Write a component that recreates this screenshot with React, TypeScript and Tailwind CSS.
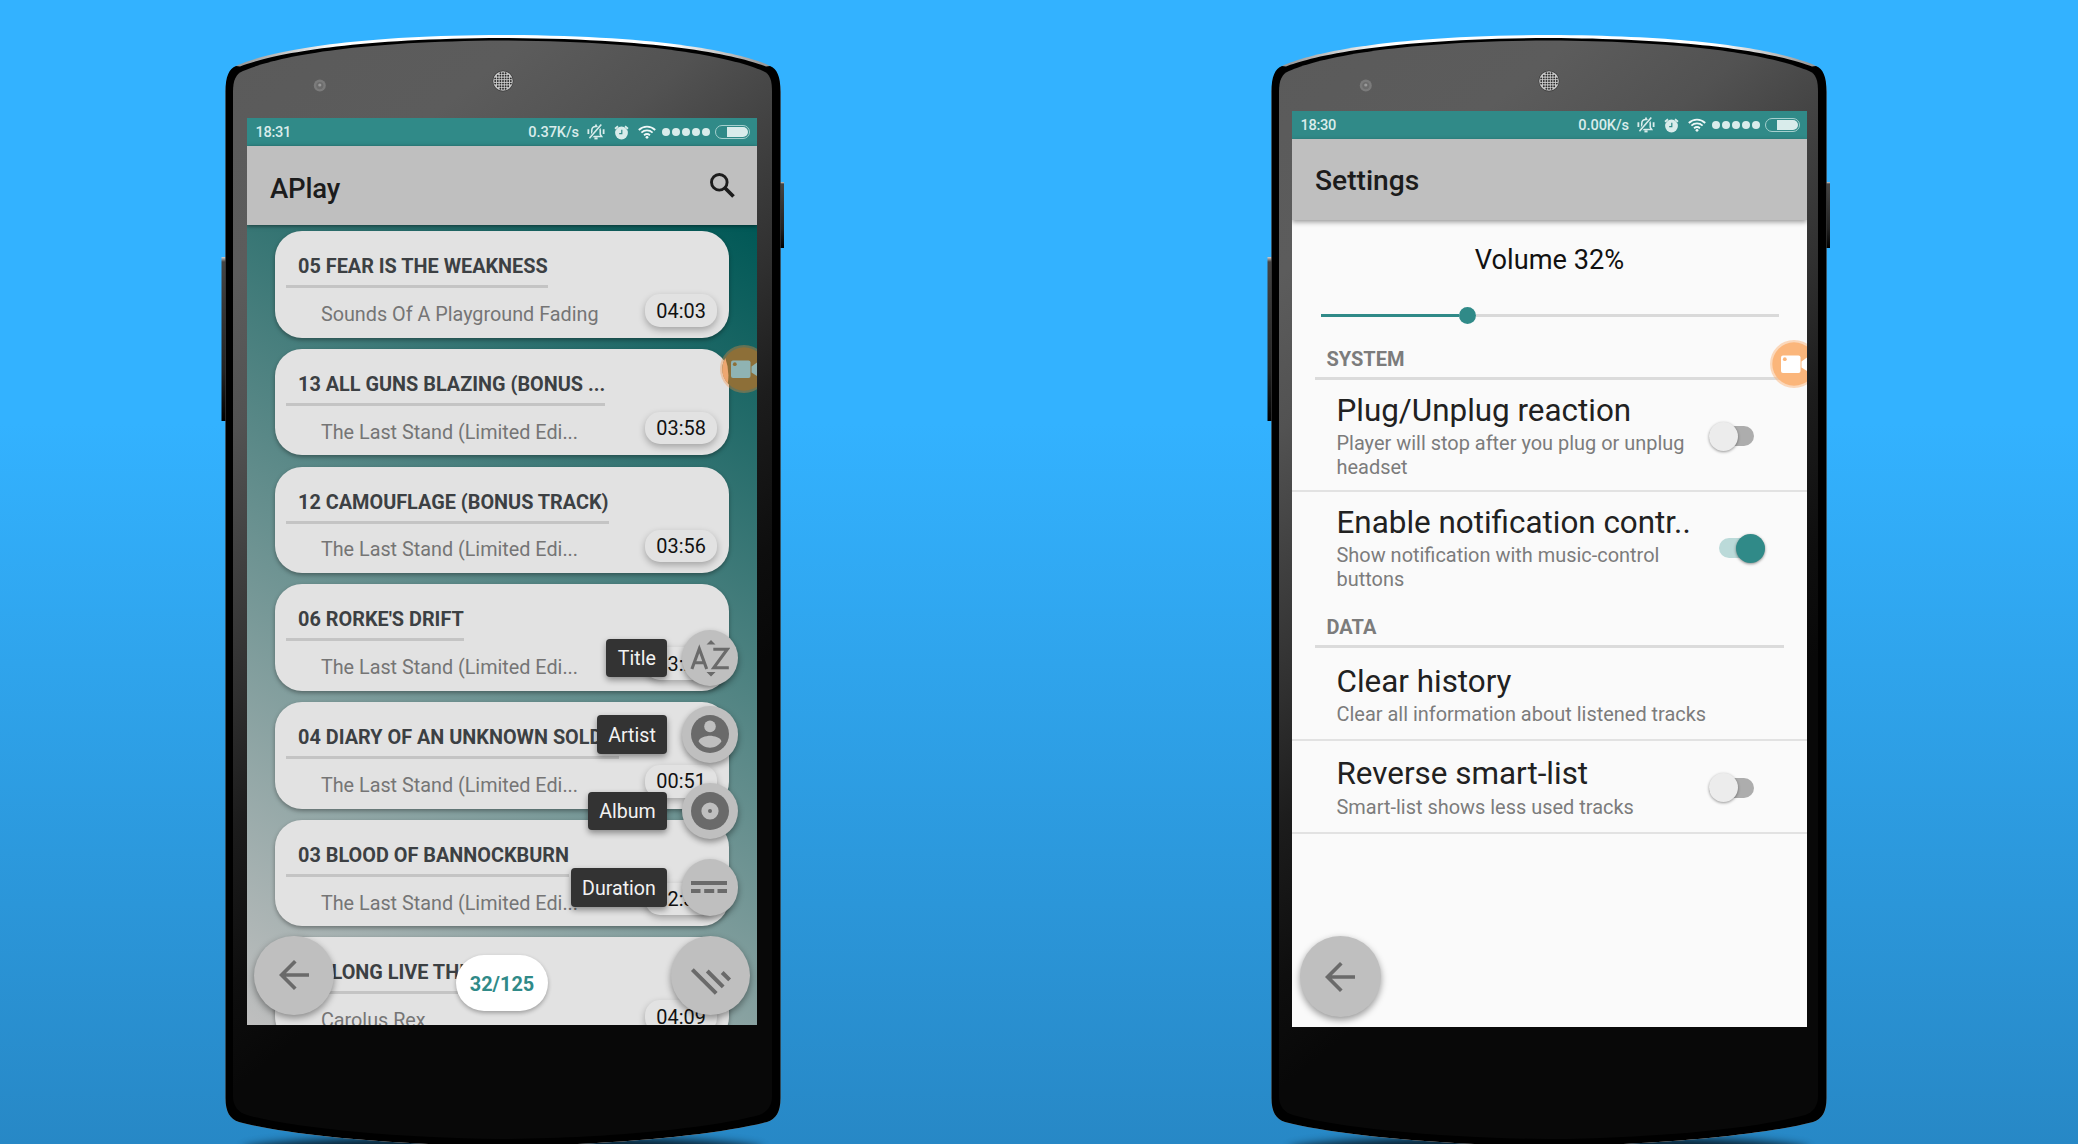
import type { ReactNode } from "react";

const BODY =
  "M4.5 92C4.5 76 9 69 17 65C40 55 110 35.500 282 35C454 35.500 524 55 547 65C555 69 559.5 76 559.5 92V1098C559.5 1112 555 1119 546 1122C500 1134 400 1145 282 1146C164 1145 64 1134 18 1122C9 1119 4.5 1112 4.5 1098Z";
const RIM =
  "M4.5 92C4.5 76 8 69 15 66L19 66.500C42 57.500 112 38.700 282 38C452 38.700 522 57.500 545 66.500L549 66C556 69 559.5 76 559.5 92V1098C559.5 1112 555 1119 546 1122C500 1134 400 1145 282 1146C164 1145 64 1134 18 1122C9 1119 4.5 1112 4.5 1098Z";
const FACE =
  "M12 92C12 80 15 74 22 71C50 59 120 41.500 282 40.500C444 41.500 514 59 542 71C549 74 551 80 551 92V1096C551 1106 546 1112 538 1115C490 1128 390 1138 282 1139C174 1138 74 1128 26 1115C17 1112 12 1106 12 1096Z";

function PhoneShell({ id }: { id: string }) {
  const dots = [];
  for (let r = -3; r <= 3; r++)
    for (let c = -3; c <= 3; c++)
      if (r * r + c * c < 12)
        dots.push(<circle key={`${r}${c}`} cx={282 + c * 2.6} cy={81 + r * 2.6} r="0.95" fill="#2a2a2a" />);
  return (
    <svg className="absolute inset-0" width="564" height="1144" viewBox="0 0 564 1144">
      <defs>
        <linearGradient id={id} gradientUnits="userSpaceOnUse" x1="0" y1="0" x2="538" y2="664">
          <stop offset="0" stopColor="#5a5a5a" />
          <stop offset="0.26" stopColor="#5c5c5c" />
          <stop offset="0.4" stopColor="#525252" />
          <stop offset="0.52" stopColor="#414141" />
          <stop offset="0.64" stopColor="#303030" />
          <stop offset="0.76" stopColor="#1c1c1c" />
          <stop offset="0.9" stopColor="#0e0e0e" />
          <stop offset="1" stopColor="#080808" />
        </linearGradient>
        <linearGradient id={`${id}k`} x1="0" y1="0" x2="0" y2="1">
          <stop offset="0" stopColor="#d0d0d0" />
          <stop offset="0.03" stopColor="#444" />
          <stop offset="0.7" stopColor="#222" />
          <stop offset="1" stopColor="#000" />
        </linearGradient>
        <linearGradient id={`${id}r`} x1="0" y1="0" x2="1" y2="0">
          <stop offset="0.03" stopColor="#999" />
          <stop offset="0.2" stopColor="#fff" />
          <stop offset="0.8" stopColor="#fff" />
          <stop offset="0.97" stopColor="#999" />
        </linearGradient>
        <filter id={`${id}b`} x="-10%" y="-200%" width="120%" height="500%">
          <feGaussianBlur stdDeviation="5" />
        </filter>
      </defs>
      <ellipse cx="282" cy="1150" rx="260" ry="14" fill="#000" opacity="0.75" filter={`url(#${id}b)`} />
      <rect x="0.5" y="257" width="5" height="164" fill={`url(#${id}k)`} />
      <rect x="558.5" y="182" width="4.500" height="66" fill={`url(#${id}k)`} />
      <path d={BODY} fill={`url(#${id}r)`} />
      <path d={RIM} fill="#000" />
      <path d={FACE} fill={`url(#${id})`} />
      <circle cx="282" cy="81" r="10.500" fill="#3a3a3a" />
      <circle cx="282" cy="81" r="9.800" fill="#c8c8c8" />
      {dots}
      <circle cx="98.800" cy="85.600" r="6" fill="#7b7b7b" />
      <circle cx="98.800" cy="85.600" r="3.600" fill="#6c6c6c" />
      <circle cx="98.800" cy="85" r="1.600" fill="#9a9a9a" />
    </svg>
  );
}

function StatusBar({ time, speed }: { time: string; speed: string }) {
  return (
    <div className="flex h-[28.3px] shrink-0 items-center bg-[#308a88] pr-[7px] pl-[8.5px] font-medium text-[#d9eceb]">
      <span className="text-[14.600px] leading-[20px] tracking-[-0.300px]">{time}</span>
      <span className="ml-auto text-[14.600px] leading-[20px] tracking-[-0.100px]">{speed}</span>
      <svg className="ml-[7.500px]" width="18" height="18" viewBox="0 0 17 16" fill="none" stroke="#d9eceb" strokeWidth="1.5">
        <path d="M3.2 12.2h10.6l-1.3-2V6.6C12.500 4.200 10.800 2.800 8.500 2.800S4.500 4.200 4.500 6.600v3.600z" />
        <path d="M7 14h3" strokeWidth="2" />
        <path d="M8.500 1v1.500M1.300 5.500v4.500M15.700 5.500v4.500" strokeWidth="1.700" />
        <path d="M2 14.500L14 .5" stroke="#308a88" strokeWidth="3" />
        <path d="M2.300 14L13.500 1" />
      </svg>
      <svg className="ml-[9px]" width="15" height="15" viewBox="0 0 15 15">
        <circle cx="7.500" cy="8" r="6.400" fill="#d9eceb" />
        <path d="M1 3.800L4 1.300M14 3.800L11 1.300" stroke="#d9eceb" strokeWidth="1.800" />
        <path d="M7.800 4.800V8.600H5.200" stroke="#308a88" strokeWidth="1.200" fill="none" />
      </svg>
      <svg className="ml-[9.500px]" width="18" height="14" viewBox="0 0 18 14" fill="none" stroke="#eef8f7" strokeWidth="1.800">
        <path d="M.8 5C5.500 .4 12.500 .4 17.200 5" />
        <path d="M3.400 7.700C6.600 4.700 11.400 4.700 14.600 7.700" />
        <path d="M6 10.300C7.800 8.800 10.200 8.800 12 10.300" />
        <circle cx="9" cy="12.300" r="1.400" fill="#eef8f7" stroke="none" />
      </svg>
      <div className="ml-[6px] flex gap-[2px]">
        {[0, 1, 2, 3, 4].map((i) => (
          <span key={i} className="size-[8px] rounded-full bg-[#d9eceb]" />
        ))}
      </div>
      <div className="ml-[5px] flex h-[13.500px] w-[35px] justify-end rounded-full border border-[#a5d0ce] p-px">
        <span className="w-[21.500px] rounded-r-full bg-[#d9eceb]" />
      </div>
    </div>
  );
}

function Recorder({ dim, className }: { dim?: boolean; className: string }) {
  const ink = dim ? "#8fb3b3" : "#ffffff";
  const dot = dim ? "#8d6f38" : "#fbb67b";
  return (
    <div className={className}>
      <svg width="48" height="48" viewBox="0 0 48 48">
        <circle cx="24" cy="24" r="24" fill={dim ? "#f58b3c" : "#fbb67b"} opacity={dim ? 0.35 : 0.5} />
        <circle cx="24" cy="24" r="21.700" fill={dim ? "#8d6f38" : "#fbb67b"} />
        {dim && <path d="M5.300 13A21.700 21.700 0 0 0 7.800 38.500Q9.800 25 5.300 13" fill="#eda771" />}
        <rect x="11" y="15.500" width="19.500" height="17.500" rx="2" fill={ink} />
        <circle cx="14.800" cy="19.200" r="1.900" fill={dot} />
        <path d="M31.500 21.500L37 17.500V31L31.500 27.500Z" fill={ink} />
      </svg>
    </div>
  );
}

const tracks = [
  ["05 FEAR IS THE WEAKNESS", "Sounds Of A Playground Fading", "04:03"],
  ["13 ALL GUNS BLAZING (BONUS ...", "The Last Stand (Limited Edi...", "03:58"],
  ["12 CAMOUFLAGE (BONUS TRACK)", "The Last Stand (Limited Edi...", "03:56"],
  ["06 RORKE'S DRIFT", "The Last Stand (Limited Edi...", "03:24"],
  ["04 DIARY OF AN UNKNOWN SOLD...", "The Last Stand (Limited Edi...", "00:51"],
  ["03 BLOOD OF BANNOCKBURN", "The Last Stand (Limited Edi...", "02:38"],
  ["01. LONG LIVE THE KING", "Carolus Rex", "04:09"],
];

function BackArrow() {
  return (
    <svg width="30" height="30" viewBox="0 0 30 30" fill="none" stroke="#6a6a6a" strokeWidth="3.700">
      <path d="M30 15H3M16.300 1.300L2.600 15L16.300 28.700" />
    </svg>
  );
}

const menu: { label: string; icon: ReactNode }[] = [
  {
    label: "Title",
    icon: (
      <svg width="40" height="40" viewBox="0 0 40 40" fill="none" stroke="#6a6a6a" strokeWidth="3.100">
        <path d="M1.900 31L9.300 10.800L16.700 31M4.300 24.800H14.300" />
        <path d="M23.300 11.200H37.300L23.800 29.700H38.800" />
        <path d="M16.500 6.500h9L21 2zM16.500 34h9L21 38.500z" fill="#6a6a6a" stroke="none" />
      </svg>
    ),
  },
  {
    label: "Artist",
    icon: (
      <svg width="38" height="38" viewBox="0 0 38 38">
        <circle cx="19" cy="19" r="19" fill="#6a6a6a" />
        <circle cx="19" cy="11.400" r="5.800" fill="#bfbfbf" />
        <path d="M7.600 26.600C7.600 22.800 15.200 20.700 19 20.700S30.400 22.800 30.400 26.600C28 30.300 23.800 32.700 19 32.700S10 30.300 7.600 26.600Z" fill="#bfbfbf" />
      </svg>
    ),
  },
  {
    label: "Album",
    icon: (
      <svg width="38" height="38" viewBox="0 0 38 38">
        <circle cx="19" cy="19" r="19" fill="#6a6a6a" />
        <circle cx="19" cy="19" r="8.600" fill="#bfbfbf" />
        <circle cx="19" cy="19" r="2" fill="#6a6a6a" />
      </svg>
    ),
  },
  {
    label: "Duration",
    icon: (
      <svg className="mr-[2px]" width="36" height="12" viewBox="0 0 36 12" fill="#6a6a6a">
        <path d="M0 0h36v4H0zM0 8h9.500v4H0zM13.200 8h10v4h-10zM26.500 8H36v4h-9.500z" />
      </svg>
    ),
  },
];

function MusicScreen() {
  return (
    <div className="relative mt-[118px] ml-[26px] flex h-[907px] w-[510px] flex-col overflow-hidden bg-[#bfbfbf]">
      <StatusBar time="18:31" speed="0.37K/s" />
      <header className="z-10 flex h-[79px] shrink-0 items-center justify-between bg-[#bfbfbf] pr-[22px] pl-[23px] shadow-[0_1px_4px_rgba(0,0,0,0.5)]">
        <h1 className="mt-[5px] text-[27.600px] font-medium tracking-[-0.200px] text-[#1c1c1c]">APlay</h1>
        <svg width="25" height="25" viewBox="0 0 25 25" fill="none" stroke="#1c1c1c" strokeWidth="2.900">
          <circle cx="9.300" cy="9.300" r="7.800" />
          <path d="M15 15L23.500 23.500" strokeWidth="3.700" />
        </svg>
      </header>
      <div className="flex min-h-0 flex-1 flex-col gap-[11.200px] bg-[linear-gradient(212.5deg,#005856_0%,#bfbfbf_100%)] px-[28.400px] pt-[6px]">
        {tracks.map(([title, album, time]) => (
          <article
            key={title}
            className="flex h-[106.500px] shrink-0 flex-col rounded-[27px] bg-[#e2e2e2] shadow-[0_2px_4px_rgba(0,0,0,0.35)]"
          >
            <h2 className="mt-[24px] ml-[11px] h-[33px] self-start border-b-[3px] border-[#c4c4c4] pl-[11.700px] text-[19.850px] leading-[24px] font-bold whitespace-nowrap text-[#3c4043]">
              {title}
            </h2>
            <div className="flex justify-between pr-[11.500px] pl-[45.500px]">
              <p className="mt-[14.800px] text-[19.800px] leading-[24px] whitespace-nowrap text-[#757575]">{album}</p>
              <span className="mt-[6px] flex h-[32.500px] w-[72px] items-center justify-center rounded-[15px] bg-[#e2e2e2] pt-[2px] text-[19.900px] text-[#111] shadow-[0_3px_7px_rgba(0,0,0,0.28)]">
                {time}
              </span>
            </div>
          </article>
        ))}
      </div>
      <Recorder dim className="absolute top-[226.700px] left-[473px]" />
      <div className="absolute top-[511.500px] right-[18.700px] flex flex-col items-end gap-[20px]">
        {menu.map((m) => (
          <div key={m.label} className="flex h-[56.500px] items-center gap-[14.500px]">
            <span className="flex h-[38.500px] items-center rounded-[4px] bg-[#333] px-[11.500px] pt-[2px] text-[19.600px] text-[#f2f2f2] shadow-[0_3px_6px_rgba(0,0,0,0.4)]">
              {m.label}
            </span>
            <span className="flex size-[56.500px] items-center justify-center rounded-full bg-[#bfbfbf] shadow-[0_3px_6px_rgba(0,0,0,0.4)]">
              {m.icon}
            </span>
          </div>
        ))}
      </div>
      <div className="absolute bottom-[10px] left-[7px] flex size-[79.500px] items-center justify-center rounded-full bg-[#bfbfbf] shadow-[0_3px_7px_rgba(0,0,0,0.4)]">
        <BackArrow />
      </div>
      <div className="absolute bottom-[14px] left-[209px] flex h-[56px] w-[92px] items-center justify-center rounded-[28px] bg-white pt-[3px] text-[19.900px] font-bold text-[#308a88] shadow-[0_2px_4px_rgba(0,0,0,0.3)]">
        32/125
      </div>
      <div className="absolute right-[7px] bottom-[10px] flex size-[79.500px] items-center justify-center rounded-full bg-[#bfbfbf] shadow-[0_3px_7px_rgba(0,0,0,0.4)]">
        <svg width="80" height="80" viewBox="0 0 80 80" stroke="#6a6a6a" strokeWidth="4">
          <path d="M21.500 34.500L45.500 58.500M36.500 36L52.500 52M51.500 37.500L59 45" />
        </svg>
      </div>
    </div>
  );
}

function Switch({ on }: { on?: boolean }) {
  return on ? (
    <div className="mr-[42.500px] flex h-[20px] w-[46px] items-center justify-end rounded-full bg-[#bbdad9]">
      <span className="size-[29px] shrink-0 rounded-full bg-[#308a88] shadow-[0_1px_3px_rgba(0,0,0,0.45)]" />
    </div>
  ) : (
    <div className="mr-[53px] flex h-[20px] w-[46px] items-center rounded-full bg-[#adadad]">
      <span className="size-[29px] shrink-0 rounded-full bg-[#ececec] shadow-[0_1px_3px_rgba(0,0,0,0.4)]" />
    </div>
  );
}

function Heading({ children, className }: { children: string; className: string }) {
  return (
    <div className={className}>
      <h3 className="h-[34px] border-b-[3px] border-[#dbdbdb] pl-[11.500px] text-[20px] leading-[26px] font-bold text-[#7c7c7c]">
        {children}
      </h3>
    </div>
  );
}

function Row({ title, text, className, children }: { title: string; text: string; className: string; children?: ReactNode }) {
  return (
    <div className={className}>
      <div className="w-[380px]">
        <h4 className="text-[31.400px] leading-[36px] whitespace-nowrap text-[#212121]">{title}</h4>
        <p className="mt-[3.500px] w-[365px] text-[19.950px] leading-[23.500px] text-[#7c7c7c]">{text}</p>
      </div>
      {children}
    </div>
  );
}

function SettingsScreen() {
  return (
    <div className="relative mt-[111px] ml-[25px] flex h-[916px] w-[515px] flex-col overflow-hidden bg-[#fafafa]">
      <StatusBar time="18:30" speed="0.00K/s" />
      <header className="flex h-[80.700px] shrink-0 items-center bg-[#bfbfbf] pl-[23px] shadow-[0_2px_5px_rgba(0,0,0,0.4)]">
        <h1 className="mt-[3px] text-[28.200px] font-medium text-[#1c1c1c]">Settings</h1>
      </header>
      <p className="mt-[25px] text-center text-[27.200px] leading-[30px] text-[#111]">Volume 32%</p>
      <div className="mt-[31.500px] mr-[28px] ml-[28.500px] flex h-[18px] items-center">
        <span className="h-[3px] w-[138px] bg-[#308a88]" />
        <span className="size-[17.500px] rounded-full bg-[#308a88]" />
        <span className="h-[3px] flex-1 bg-[#d9d9d9]" />
      </div>
      <Heading className="mt-[22px] mr-[23px] ml-[23px]">SYSTEM</Heading>
      <Row
        className="flex h-[111.500px] items-center justify-between border-b-2 border-[#e2e2e2] pt-[2px] pl-[44.500px]"
        title="Plug/Unplug reaction"
        text="Player will stop after you plug or unplug headset"
      >
        <Switch />
      </Row>
      <Row
        className="flex h-[110.500px] items-center justify-between pt-[2px] pl-[44.500px]"
        title="Enable notification contr.."
        text="Show notification with music-control buttons"
      >
        <Switch on />
      </Row>
      <Heading className="mt-[11.500px] mr-[23px] ml-[23px]">DATA</Heading>
      <Row
        className="flex h-[93.500px] items-center justify-between border-b-2 border-[#e2e2e2] pt-[3px] pl-[44.500px] [&_p]:w-[380px]"
        title="Clear history"
        text="Clear all information about listened tracks"
      />
      <Row
        className="flex h-[93px] items-center justify-between border-b-2 border-[#e2e2e2] pt-[2px] pl-[44.500px]"
        title="Reverse smart-list"
        text="Smart-list shows less used tracks"
      >
        <Switch />
      </Row>
      <Recorder className="absolute top-[229px] left-[478px]" />
      <div className="absolute bottom-[10px] left-[7.500px] flex size-[81px] items-center justify-center rounded-full bg-[#bfbfbf] shadow-[0_3px_7px_rgba(0,0,0,0.4)]">
        <BackArrow />
      </div>
    </div>
  );
}

export default function App() {
  return (
    <main className="flex h-[1144px] w-[2078px] gap-[482px] overflow-hidden bg-[linear-gradient(180deg,#33b2ff_0%,#33b2ff_37%,#2788c6_100%)] pl-[221px] font-['Roboto',sans-serif]">
      <section className="relative h-[1144px] w-[564px] overflow-hidden">
        <PhoneShell id="left" />
        <MusicScreen />
      </section>
      <section className="relative h-[1144px] w-[564px] overflow-hidden">
        <PhoneShell id="right" />
        <SettingsScreen />
      </section>
    </main>
  );
}
